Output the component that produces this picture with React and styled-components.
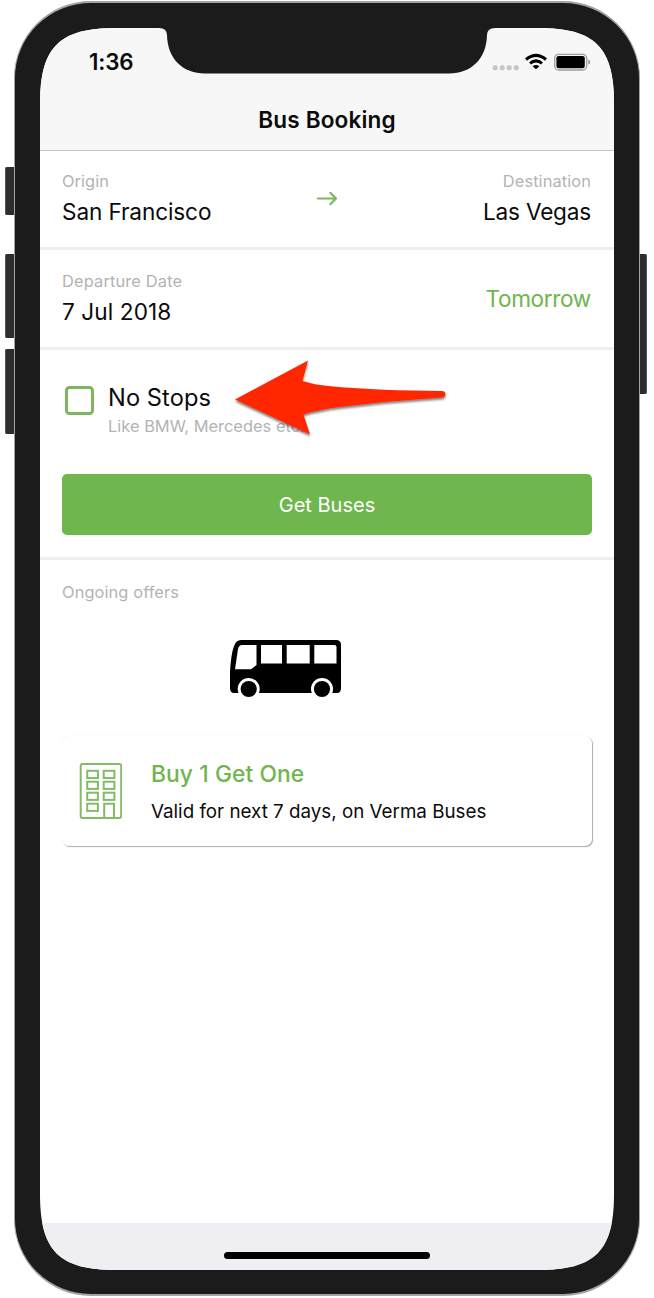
import React from 'react';
import styled, { createGlobalStyle } from 'styled-components';

const green = '#6eb64d';
const divider = '#efeff3';

const GlobalStyle = createGlobalStyle`
  * { box-sizing: border-box; }
  body {
    margin: 0;
    background: #fff;
    font-family: Inter, "Liberation Sans", sans-serif;
    color: #0b0b0b;
  }
`;

const Stage = styled.main`
  position: relative;
  width: 654px;
  height: 1298px;
  padding: 1px 14px;
  overflow: hidden;
`;

const SideButton = styled.span`
  position: absolute;
  top: ${(p) => p.$top}px;
  ${(p) => (p.$right ? 'right: 7px;' : 'left: 5px;')}
  width: 12px;
  height: ${(p) => p.$length}px;
  border-radius: ${(p) => (p.$right ? '0 2px 2px 0' : '2px 0 0 2px')};
  background: #2d2d2d;
  box-shadow: inset ${(p) => (p.$right ? '-1px' : '1px')} 0 #555;
`;

const Body = styled.div`
  position: relative;
  width: 626px;
  height: 1295px;
  padding: 25px;
  border: 2px solid #a3a3a3;
  border-left-width: 1px;
  border-right-width: 1px;
  border-radius: 77px;
  background: #1b1b1b;
`;

const Screen = styled.div`
  position: relative;
  display: flex;
  flex-direction: column;
  width: 574px;
  height: 1242px;
  clip-path: path("M0 76C0 19 19 0 76 0H498C555 0 574 19 574 76V1166C574 1223 555 1242 498 1242H76C19 1242 0 1223 0 1166Z");
  background: #fff;
`;

const Notch = styled.svg`
  position: absolute;
  top: -1px;
  left: 119px;
`;

const NavBar = styled.header`
  height: 123px;
  flex: none;
  background: #f7f7f8;
  border-bottom: 1px solid #c6c6c8;
`;

const StatusBar = styled.div`
  display: flex;
  justify-content: space-between;
  align-items: center;
  height: 70px;
  padding: 0 22px 0 49px;
`;

const Clock = styled.time`
  margin-top: -2px;
  font-size: 22.3px;
  line-height: 26px;
  font-weight: 600;
  letter-spacing: -0.15px;
`;

const Title = styled.h1`
  margin: 8px 0 0;
  text-align: center;
  font-size: 22.6px;
  line-height: 28px;
  font-weight: 600;
  letter-spacing: 0.12px;
`;

const Row = styled.section`
  display: flex;
  justify-content: space-between;
  flex: none;
  height: ${(p) => p.$height}px;
  padding: ${(p) => p.$top || 20}px 23px 0 22px;
  border-bottom: 3px solid ${divider};
`;

const Field = styled.div`
  display: flex;
  flex: 1;
  flex-direction: column;
  gap: 6px;
  text-align: ${(p) => p.$align || 'left'};
`;

const Caption = styled.span`
  font-size: 16.4px;
  line-height: 20px;
  letter-spacing: ${(p) => p.$track || 0}px;
  color: #b3b3b3;
`;

const Value = styled.span`
  font-size: ${(p) => p.$size || 22.6}px;
  line-height: 30px;
  letter-spacing: ${(p) => p.$track || 0}px;
  color: ${(p) => (p.$accent ? green : '#0b0b0b')};
`;

const RowAction = styled.div`
  padding-top: 13px;
`;

const ArrowIcon = styled.svg`
  margin-top: 19px;
  flex: none;
`;

const Search = styled.section`
  display: flex;
  flex-direction: column;
  flex: none;
  height: 210px;
  padding: 33px 22px 0;
  border-bottom: 3px solid ${divider};
`;

const Option = styled.label`
  display: flex;
  gap: 14px;
  height: 91px;
  padding-left: 3px;
`;

const CheckBox = styled.span`
  width: 29px;
  height: 29px;
  margin-top: 2.6px;
  border: 3px solid #7db65d;
  border-radius: 4.5px;
`;

const OptionText = styled.span`
  display: flex;
  flex-direction: column;
  gap: 3px;
`;

const SubmitButton = styled.button`
  height: 61px;
  border: 0;
  border-radius: 5px;
  background: ${green};
  color: #fff;
  font: 400 20px/28px Inter, "Liberation Sans", sans-serif;
`;

const Offers = styled.section`
  display: flex;
  flex-direction: column;
  flex: 1;
  padding: 22px 22px 0;
`;

const BusIcon = styled.svg`
  margin: 37px 0 0 167px;
  flex: none;
`;

const OfferCard = styled.article`
  display: flex;
  align-items: flex-start;
  gap: 29px;
  height: 110px;
  margin-top: 38px;
  padding: 26px 17px;
  border-radius: 7px;
  background: #fff;
  box-shadow: 1px 1px 1px rgba(0, 0, 0, 0.32), 0 0 1px rgba(0, 0, 0, 0.12);
`;

const OfferText = styled.div`
  display: flex;
  flex-direction: column;
  gap: 11px;
`;

const OfferTitle = styled.h2`
  margin: -3px 0 0;
  font-size: 22.8px;
  line-height: 30px;
  font-weight: 500;
  letter-spacing: 0.08px;
  color: ${green};
`;

const OfferDetail = styled.p`
  margin: 0;
  font-size: 18.8px;
  line-height: 24px;
`;

const HomeArea = styled.footer`
  display: flex;
  justify-content: center;
  flex: none;
  height: 47px;
  padding-top: 29px;
  background: ${divider};
`;

const HomeBar = styled.span`
  width: 206px;
  height: 7px;
  border-radius: 4px;
  background: #000;
`;

const Pointer = styled.svg`
  position: absolute;
  left: 225px;
  top: 350px;
`;

function StatusIcons() {
  return (
    <svg width="100" height="20" viewBox="0 -0.8 100 20">
      <g fill="#c6c6c8">
        {[0.7, 7.7, 14.7, 21.7].map((x) => (
          <rect key={x} x={x} y="11.4" width="5" height="5" rx="1.8" />
        ))}
      </g>
      <g fill="none" stroke="#000" strokeWidth="3">
        <path d="M34 5.7Q44 -2.6 54 5.7" />
        <path d="M38 9.6Q44 4.6 50 9.6" />
      </g>
      <path d="M40.6 12.4Q44 9.8 47.4 12.4L44 15.5Z" />
      <rect x="62.7" y="0.6" width="32" height="15.6" rx="4" fill="none" stroke="#9d9d9f" strokeWidth="1.3" />
      <rect x="64.4" y="2.3" width="28.4" height="12.2" rx="2.2" />
      <path d="M96.3 5.7Q98.3 6.4 98.3 8.3T96.3 11Z" fill="#9d9d9f" />
    </svg>
  );
}

function Bus() {
  return (
    <BusIcon width="113" height="59" viewBox="229 639 113 59">
      <path d="M241 640H336Q341 640 341 645V688Q341 693 337 693H234Q230 693 230 688V672Q231 654 234 646Q236 640 241 640Z" />
      <g fill="#fff">
        <path d="M242 645H256.5V665L251 669.3H235L238 649Q239 645 242 645Z" />
        <path d="M261 645H282V663.5H261ZM286.7 645H309.7V663.5H286.7ZM314.3 645H334.5Q336.5 645 336.5 647V663.5H314.3Z" />
        <circle cx="248.7" cy="689" r="11" />
        <circle cx="322" cy="689" r="11" />
      </g>
      <circle cx="248.7" cy="689" r="8.1" />
      <circle cx="322" cy="689" r="8.1" />
    </BusIcon>
  );
}

function Building() {
  return (
    <svg width="43" height="57" viewBox="79 762 43 57" fill="none" stroke="#83bb66" strokeWidth="2">
      <rect x="80.7" y="764" width="40.5" height="54" rx="2" />
      {[770.8, 781.7, 792.7, 803.7].map((y, i) => (
        <g key={y}>
          <rect x="87.2" y={y} width="10.7" height="7.2" />
          {i < 3 && <rect x="103.7" y={y} width="10.7" height="7.2" />}
        </g>
      ))}
      <path d="M104.2 817.5V803.7H114V817.5" />
    </svg>
  );
}

export default function App() {
  return (
    <Stage>
      <GlobalStyle />
      <SideButton $top={167} $length={48} />
      <SideButton $top={254} $length={84} />
      <SideButton $top={349} $length={85} />
      <SideButton $top={254} $length={140} $right />
      <Body>
        <Screen>
          <NavBar>
            <StatusBar>
              <Clock>1:36</Clock>
              <StatusIcons />
            </StatusBar>
            <Title>Bus Booking</Title>
          </NavBar>
          <Notch width="336" height="47" viewBox="159 27 336 47">
            <path d="M159 27V28Q166.8 28.2 167 35C167.5 59 183 73.5 205 73.5H449C471 73.5 486.5 59 487 35Q487.2 28.2 495 28V27Z" fill="#1b1b1b" />
          </Notch>
          <Row $height={99}>
            <Field>
              <Caption $track={0.05}>Origin</Caption>
              <Value $track={-0.12}>San Francisco</Value>
            </Field>
            <ArrowIcon width="22" height="18" viewBox="0 0 22 18" fill="none" stroke="#7db65d" strokeWidth="2.2" strokeLinecap="round" strokeLinejoin="round">
              <path d="M2 8.5H20M14.3 2.8L20 8.5L14.3 14.2" />
            </ArrowIcon>
            <Field $align="right">
              <Caption $track={0.1}>Destination</Caption>
              <Value $track={-0.2}>Las Vegas</Value>
            </Field>
          </Row>
          <Row $height={100} $top={21}>
            <Field>
              <Caption $track={0.15}>Departure Date</Caption>
              <Value $track={0.1}>7 Jul 2018</Value>
            </Field>
            <RowAction>
              <Value $accent $track={-0.35}>Tomorrow</Value>
            </RowAction>
          </Row>
          <Search>
            <Option>
              <CheckBox />
              <OptionText>
                <Value $size={23.6} $track={0.1}>No Stops</Value>
                <Caption $track={0.02}>Like BMW, Mercedes etc.</Caption>
              </OptionText>
            </Option>
            <SubmitButton>Get Buses</SubmitButton>
          </Search>
          <Offers>
            <Caption $track={0.1}>Ongoing offers</Caption>
            <Bus />
            <OfferCard>
              <Building />
              <OfferText>
                <OfferTitle>Buy 1 Get One</OfferTitle>
                <OfferDetail>Valid for next 7 days, on Verma Buses</OfferDetail>
              </OfferText>
            </OfferCard>
          </Offers>
          <HomeArea>
            <HomeBar />
          </HomeArea>
        </Screen>
      </Body>
      <Pointer width="230" height="95" viewBox="225 350 230 95">
        <defs>
          <filter id="lift" x="-10%" y="-10%" width="120%" height="130%">
            <feDropShadow dx="0" dy="2" stdDeviation="1.3" floodOpacity="0.5" />
          </filter>
        </defs>
        <path filter="url(#lift)" fill="#ff2800" d="M235 399.5L308 360.5L302.5 381Q315 385 333 386.5Q380 390.5 442 391Q445.5 391.3 445.5 394.3T442 397.6Q390 401 340 407Q317 410 303.5 414.5L310 434.5Z" />
      </Pointer>
    </Stage>
  );
}
